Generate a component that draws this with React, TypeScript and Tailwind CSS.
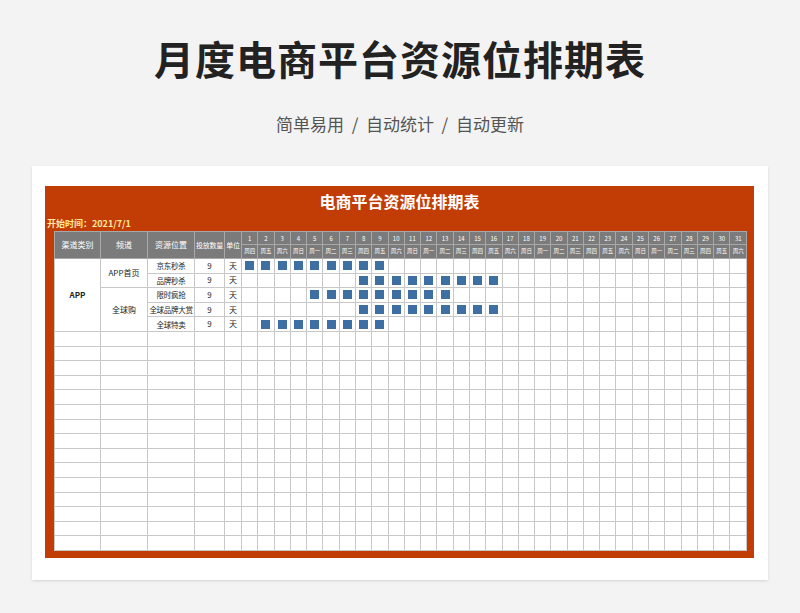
import React from 'react';

const weekdays = ['周四', '周五', '周六', '周日', '周一', '周二', '周三'];
const days = Array.from({ length: 31 }, (_, i) => i + 1);

const rows = [
  { pos: '京东秒杀', from: 1, to: 9 },
  { pos: '品牌秒杀', from: 8, to: 16 },
  { pos: '限时疯抢', from: 5, to: 13 },
  { pos: '全球品牌大赏', from: 8, to: 16 },
  { pos: '全球特卖', from: 2, to: 9 },
];

const cell = 'border border-[#c8c8c8] p-0 h-[14.6px] text-center';
const head = 'border border-[#a8a8a8] bg-[#7b7b7b] text-white p-0 text-center';

export default function App() {
  return (
    <div className="w-[800px] h-[613px] bg-[#f3f3f3] flex flex-col items-center" style={{ fontFamily: '"Noto Sans CJK SC", "Noto Sans", sans-serif' }}>
      <h1 className="mt-[30px] text-[40px] leading-[56px] font-bold text-[#222] tracking-[1px]">月度电商平台资源位排期表</h1>
      <p className="mt-[26px] text-[17px] leading-[24px] text-[#555] whitespace-pre">简单易用  /  自动统计  /  自动更新</p>
      <div className="mt-[30px] w-[736px] h-[414px] bg-white shadow-sm pt-[20px] pl-[13px]">
        <div className="w-[709px] h-[372px] bg-[#c23d05] px-[9px] flex flex-col">
          <div className="h-[30px] flex items-center justify-center text-white text-[16px] font-bold">电商平台资源位排期表</div>
          <div className="h-[15px] text-[#ffe9a0] text-[9px] font-bold leading-[15px] -ml-[7px]">开始时间：2021/7/1</div>
          <table className="table-fixed border-collapse bg-white w-[693px] text-[7.5px] text-[#222]">
            <colgroup>
              <col className="w-[46px]" />
              <col className="w-[47px]" />
              <col className="w-[47px]" />
              <col className="w-[30px]" />
              <col className="w-[17px]" />
              {days.map((d) => <col key={d} />)}
            </colgroup>
            <thead>
              <tr className="h-[13px]">
                <th rowSpan={2} className={head + ' font-normal text-[8px]'}>渠道类别</th>
                <th rowSpan={2} className={head + ' font-normal text-[8px]'}>频道</th>
                <th rowSpan={2} className={head + ' font-normal text-[8px]'}>资源位置</th>
                <th rowSpan={2} className={head + ' font-normal text-[7px] tracking-[-0.3px] whitespace-nowrap overflow-hidden'}>投放数量</th>
                <th rowSpan={2} className={head + ' font-normal text-[7px] tracking-[-0.3px] whitespace-nowrap overflow-hidden'}>单位</th>
                {days.map((d) => <th key={d} className={head + ' font-normal text-[6px]'}>{d}</th>)}
              </tr>
              <tr className="h-[14px]">
                {days.map((d) => (
                  <th key={d} className={head + ' font-normal text-[5.5px] whitespace-nowrap overflow-hidden'}>{weekdays[(d - 1) % 7]}</th>
                ))}
              </tr>
            </thead>
            <tbody>
              {Array.from({ length: 20 }, (_, r) => {
                const row = rows[r];
                return (
                  <tr key={r}>
                    {r === 0 && <td rowSpan={5} className={cell + ' font-bold text-[8px]'}>APP</td>}
                    {r === 0 && <td rowSpan={2} className={cell + ' text-[8px]'}>APP首页</td>}
                    {r === 2 && <td rowSpan={3} className={cell + ' text-[8px]'}>全球购</td>}
                    {r >= 5 && <td className={cell} />}
                    {r >= 5 && <td className={cell} />}
                    <td className={cell + ' text-[7.5px] tracking-[-0.3px] whitespace-nowrap overflow-hidden'}>{row?.pos}</td>
                    <td className={cell + ' text-[8px]'}>{row ? 9 : ''}</td>
                    <td className={cell + ' text-[8px]'}>{row ? '天' : ''}</td>
                    {days.map((d) => (
                      <td key={d} className={cell}>
                        {row && d >= row.from && d <= row.to && (
                          <div className="mx-auto w-[9px] h-[9px] bg-[#3d6fa3]" />
                        )}
                      </td>
                    ))}
                  </tr>
                );
              })}
            </tbody>
          </table>
        </div>
      </div>
    </div>
  );
}
